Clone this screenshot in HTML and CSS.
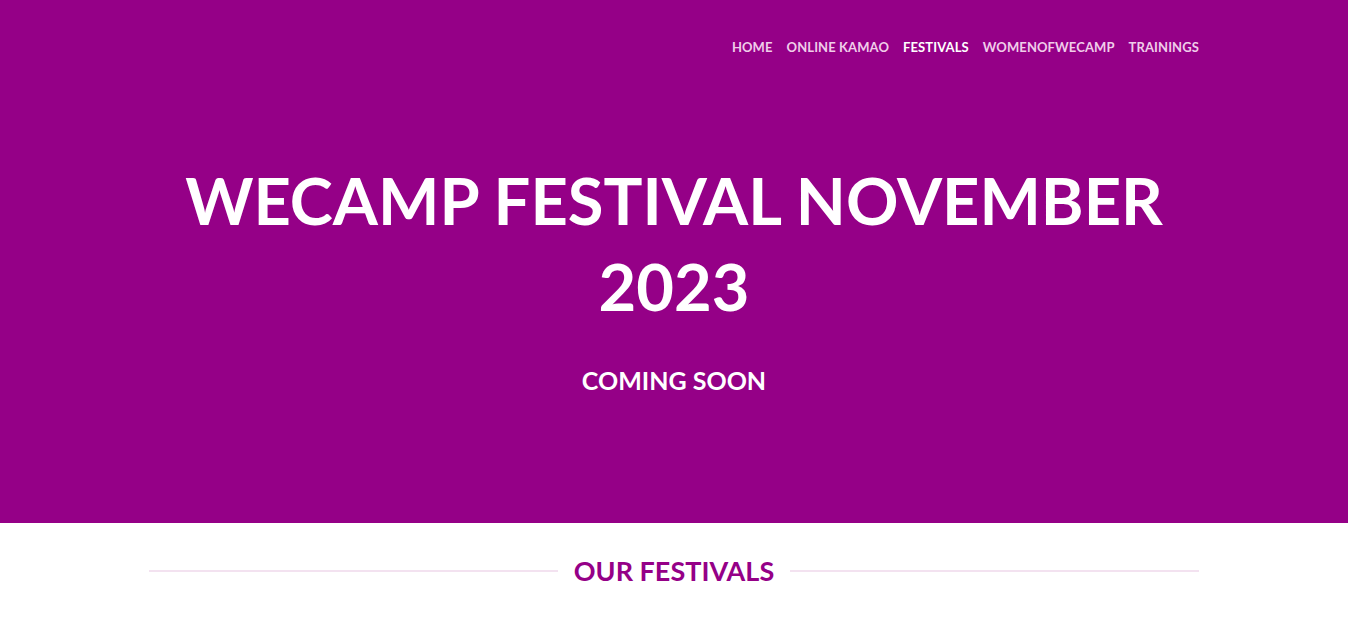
FILE: index.html
```html
<!DOCTYPE html>
<html>
<head>
<meta charset="utf-8">
<link rel="stylesheet" href="styles.css">
</head>
<body>
<header class="hero">
  <div class="container">
    <nav class="nav">
      <a href="#">Home</a>
      <a href="#">Online Kamao</a>
      <a href="#" class="active">Festivals</a>
      <a href="#">WomenofWeCamp</a>
      <a href="#">Trainings</a>
    </nav>
    <div class="hero-body">
      <h1 class="title">WeCamp Festival November 2023</h1>
      <p class="subtitle">Coming Soon</p>
    </div>
  </div>
</header>
<section class="festivals">
  <div class="container">
    <div class="section-head">
      <span class="rule"></span>
      <h2>Our Festivals</h2>
      <span class="rule"></span>
    </div>
  </div>
</section>
</body>
</html>
```

FILE: styles.css
```css
* { box-sizing: border-box; }
html, body { margin: 0; padding: 0; }
body {
  font-family: Lato, "Open Sans", sans-serif;
  background: #fff;
}
.container {
  width: 1050px;
  margin: 0 auto;
}
.hero {
  background: #950087;
  height: 523px;
  color: #fff;
}
.nav {
  display: flex;
  justify-content: flex-end;
  gap: 14px;
  padding-top: 38px;
}
.nav a {
  color: #f0cdea;
  text-decoration: none;
  text-transform: uppercase;
  font-weight: 700;
  font-size: 13px;
  line-height: 18px;
  letter-spacing: 0.1px;
}
.nav a.active { color: #fff; }
.hero-body {
  text-align: center;
  padding-top: 101px;
}
.title {
  margin: 0;
  font-size: 65px;
  line-height: 86px;
  font-weight: 700;
  text-transform: uppercase;
}
.subtitle {
  margin: 36px 0 0;
  font-size: 25px;
  font-weight: 700;
  text-transform: uppercase;
}
.festivals { padding-top: 31px; }
.section-head {
  display: flex;
  align-items: center;
  gap: 16px;
}
.rule {
  flex: 1;
  height: 2px;
  background: #f3e2f0;
}
.section-head h2 {
  margin: 0;
  color: #950087;
  font-size: 27px;
  font-weight: 700;
  text-transform: uppercase;
  line-height: 34px;
}
```
